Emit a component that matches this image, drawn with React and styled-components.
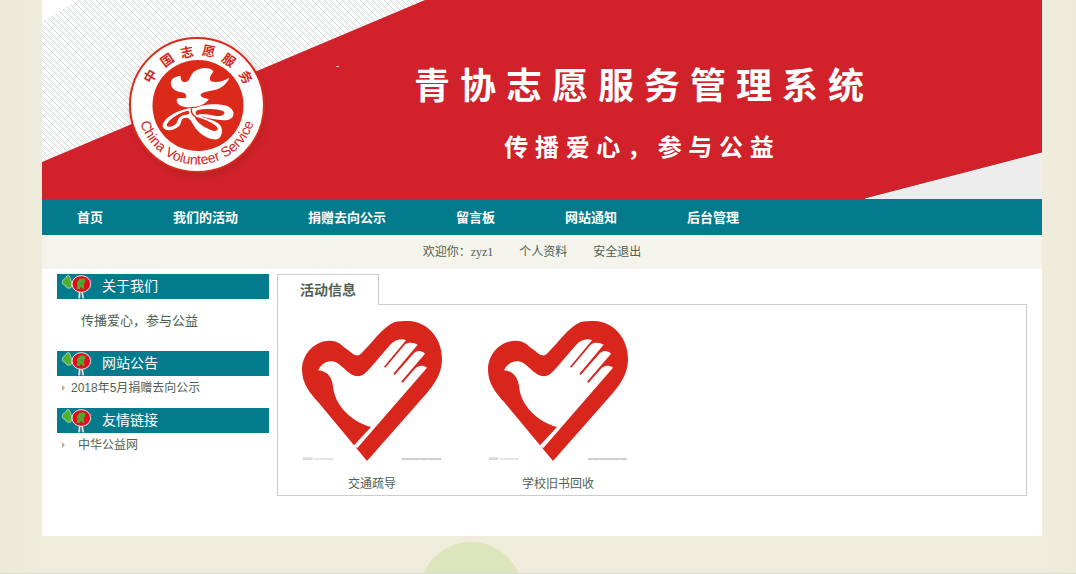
import React from "react";
import styled, { createGlobalStyle } from "styled-components";


const Global = createGlobalStyle`
    * {
      box-sizing: border-box;
    }

    body {
      margin: 0px;
      padding-left: 8px;
      background-color: #efecdb;
      background-image: linear-gradient(90deg, #ece9d6, #f0ecdb 40px, #f0ecdb calc(100% - 30px), #edead8);
      font-family: "Liberation Sans", "Noto Sans CJK SC", sans-serif;
      font-size: 12px;
      color: #4f5f53;
    }

    a {
      color: inherit;
      text-decoration: none;
    }
`

//Page Container
const Page = styled.div`
    background-color: #fff;
    max-width: 1000px;
    margin: 0px auto;
`

//Banner
const Banner = styled.header`
    background-color: #d1222b;
    position: relative;
    padding: 62px 0px 34px 372px;
    overflow: hidden;
`

//Banner Artwork
const Art = styled.svg`
    position: absolute;
    height: 100%;
    width: 100%;
    left: 0px;
    top: 0px;
`

//Banner Titles
const Titles = styled.div`
    flex-direction: column;
    position: relative;
    width: max-content;
    align-items: center;
    display: flex;
    color: #fff;
    gap: 18px;
`

//Site Name
const Name = styled.h1`
    line-height: 50px;
    font-weight: bold;
    font-size: 36px;
    margin: 0px;
`

//Slogan
const Slogan = styled.p`
    line-height: 35px;
    font-weight: bold;
    font-size: 24px;
    margin: 0px;
`

//Navigation
const Nav = styled.nav`
    background-color: #037b8c;
    flex-wrap: wrap;
    display: flex;
`

//Navigation Link
const Nl = styled.a`
    font-weight: bold;
    line-height: 34px;
    padding: 2px 35px 0px;
    font-size: 13px;
    color: #fff;
`

//User Bar
const Ub = styled.div`
    background-color: #f5f4ec;
    justify-content: center;
    padding-right: 20px;
    line-height: 34px;
    display: flex;
    gap: 26px;
`

//User Name
const User = styled.span`
    font-family: "Liberation Serif", serif;
`

//Main Content
const Mc = styled.main`
    padding: 5px 15px 40px;
    align-items: flex-start;
    display: flex;
    gap: 8px;
`

//Sidebar
const Side = styled.aside`
    flex: 0 0 212px;
`

//Sidebar Heading
const Sh = styled.h2`
    background-color: #037b8c;
    font-weight: normal;
    align-items: center;
    line-height: 25px;
    padding-left: 4px;
    font-size: 14px;
    display: flex;
    color: #fff;
    margin: 0px;
    gap: 9px;
`

//About Text
const About = styled.p`
    padding: 12px 0px 20px 24px;
    line-height: 20px;
    font-size: 13px;
    margin: 0px;
`

//Sidebar List
const List = styled.ul`
    padding: 1px 0px 9px 5px;
    list-style: none;
    margin: 0px;
`

//List Item
const Li = styled.li`
    gap: ${(p) => (p.$indent ? "13px" : "6px")};
    align-items: center;
    line-height: 22px;
    display: flex;

    &::before {
      border-left: 3px solid #b9ad93;
      border-bottom: 3px solid transparent;
      border-top: 3px solid transparent;
      content: "";
    }
`

//Activities
const Act = styled.section`
    min-width: 0px;
    flex: 1;
`

//Activities Tab
const Tab = styled.button`
    border: 1px solid #ccc;
    border-bottom: none;
    background: #fff;
    margin-bottom: -1px;
    position: relative;
    font-family: inherit;
    font-weight: bold;
    line-height: 30px;
    padding: 0px 22px;
    font-size: 14px;
    color: inherit;
    display: block;
`

//Activities Box
const Box = styled.div`
    border: 1px solid #ccc;
    padding: 16px 1px 0px;
    flex-wrap: wrap;
    display: flex;
`

//Activity
const Item = styled.a`
    flex-direction: column;
    align-items: center;
    line-height: 22px;
    display: flex;
    width: 186px;
    gap: 12px;
`

//Footer
const Footer = styled.footer`
    border-bottom: 1px solid #d9dbd4;
    margin-left: -8px;
    position: relative;
    overflow: hidden;
    height: 38px;

    &::after {
      background-color: #dde5bd;
      border-radius: 50%;
      position: absolute;
      height: 104px;
      width: 104px;
      content: "";
      left: calc(50% - 119px);
      top: 6px;
    }
`


const ring = [
    ["中", -58, 150, 76],
    ["国", -35, 167, 60],
    ["志", -11, 187, 52],
    ["愿", 12, 209, 51],
    ["服", 35, 229, 60],
    ["务", 61, 246, 77],
]

const BannerArt = () => (
    <Art viewBox="0 0 1000 199" preserveAspectRatio="xMinYMin slice" aria-hidden="true">
        <defs>
            <pattern id="hatch" width="6" height="6" patternUnits="userSpaceOnUse">
                <rect width="6" height="6" fill="#f8f9f9" />
                <path d="M-1 -1L7 7M-1 5L1 7M5 -1L7 1" stroke="#d6d9dc" strokeWidth="1" />
            </pattern>
            <filter id="soft" x="-20%" y="-20%" width="140%" height="140%">
                <feGaussianBlur stdDeviation="3" />
            </filter>
            <path id="arc" d="M97 114A59.500 59.500 0 0 0 215 114" />
        </defs>
        <path d="M0 0H383L0 162Z" fill="url(#hatch)" />
        <path d="M0 0H36L0 22Z" fill="#fff" />
        <path d="M823 199L1000 153V199Z" fill="#ededed" />
        <path d="M823 199L1000 153" stroke="#fff" strokeWidth="1" />
        <path d="M294 66.500H297" stroke="#f3c9cb" />
        <circle cx="157" cy="109" r="68" fill="#9c1a1c" opacity="0.35" filter="url(#soft)" />
        <circle cx="155" cy="105" r="67" fill="#fff" stroke="#dc2a1a" strokeWidth="2" />
        <circle cx="156" cy="105.500" r="45.500" fill="#dc2a1a" />
        <g fill="#d3261b" fontWeight="bold" fontSize="13" textAnchor="middle">
            {ring.map(([c, a, x, y]) => (
                <text key={a} transform={`translate(${x - 42} ${y}) rotate(${a})`} y="5">{c}</text>
            ))}
        </g>
        <path id="arcLow" d="M95.500 105A59.500 59.500 0 0 0 214.500 105" fill="none" />
        <text fill="#d3261b" fontSize="14" textAnchor="middle">
            <textPath href="#arcLow" startOffset="50%">China Volunteer Service</textPath>
        </text>
        <g transform="translate(118 65) scale(0.33333)">
            <path fill="#fff" d="M33 58C30 45 40 35 62 32C60 48 72 56 84 48C92 40 92 22 112 14C132 6 155 8 160 20C152 30 146 40 152 48C166 54 188 50 208 38C200 58 182 72 160 76C140 80 122 82 122 92C126 98 138 100 146 102C138 116 122 124 98 126C74 130 50 122 50 106C50 98 60 98 74 100C84 96 78 84 66 82C46 80 34 70 33 58Z" />
            <path fill="#fff" d="M98 129C60 130 6 160 8 184C12 202 46 198 60 180C66 168 62 158 80 158C94 160 96 178 112 196C128 214 152 226 172 223C188 216 190 192 180 180C168 166 138 162 122 154C146 160 186 170 206 164L216 158C226 146 220 132 202 123C176 114 130 116 110 128Z" />
            <path fill="#dc2a1a" d="M82 137C60 142 22 164 20 182C28 190 44 182 50 174C54 160 62 150 78 149C92 149 90 138 82 137Z" />
            <path fill="#dc2a1a" d="M104 156C112 154 168 174 173 190C174 198 164 200 154 196C136 188 112 176 104 156Z" />
            <path fill="#dc2a1a" d="M112 136C134 130 176 130 192 140C198 148 184 156 164 152C142 148 124 144 112 150C104 146 106 140 112 136Z" />
            <path fill="none" stroke="#dc2a1a" strokeWidth="4" d="M96 130C90 138 98 152 108 156" />
        </g>
    </Art>
)

const Mascot = () => (
    <svg width="32" height="25" viewBox="9 6 96 75" aria-hidden="true">
        <path d="M65 58L63 79M72 60L76 79" stroke="#dfe6e6" strokeWidth="5" />
        <path d="M67 64L69 78" stroke="#7a8f95" strokeWidth="3" />
        <path d="M13 31C14 20 20 23 23 18C25 9 35 8 36 17L42 34L39 47C30 52 22 45 21 39C15 39 12 36 13 31Z" fill="#4fb12f" stroke="#dcebe4" strokeWidth="2" />
        <ellipse cx="70" cy="36" rx="28" ry="25" fill="#e30b20" stroke="#f3e6e4" strokeWidth="3" />
        <path d="M62 24C66 18 80 19 83 24L79 34L77 40L80 50H73L69 44L65 51H56L59 38L56 33Z" fill="#52a92e" />
        <path d="M68 34H74" stroke="#3d8a2a" strokeWidth="2" />
        <path d="M95 23L100 27L96 32" fill="none" stroke="#e56bc2" strokeWidth="3" />
    </svg>
)

const Heart = () => (
    <svg width="140" height="140" viewBox="96 158 420 420" aria-hidden="true">
        <path fill="#d9261c" d="M96 305C96 255 135 217 180 217C205 217 213 230 235 246C250 260 264 268 275 254C310 220 335 180 372 162C385 158 400 158 415 158C475 160 516 212 516 272C516 315 495 345 470 375L291 578L252 531L145 402C120 375 96 345 96 305Z" />
        <path fill="#fff" d="M144 306C155 285 170 277 188 279C216 284 234 325 266 324C282 322 290 310 300 300L360 230C374 214 394 208 408 216L342 295L346 298L404 229C415 220 432 222 443 229L370 316L374 320L432 254C442 245 456 246 465 256L393 340L398 343L436 300C446 290 460 290 471 298L262 539L250 533L303 476C245 462 195 410 190 360C187 330 175 308 144 306Z" />
        <path d="M99 571H128" stroke="#d6d6d6" strokeWidth="8" strokeDasharray="8 1" />
        <path d="M132 572H189" stroke="#d6d6d6" strokeWidth="4" strokeDasharray="5 1" />
        <path d="M396 572H513" stroke="#b5b5b5" strokeWidth="5" strokeDasharray="6 1" />
    </svg>
)

const links = ["首页", "我们的活动", "捐赠去向公示", "留言板", "网站通知", "后台管理"]
const activities = ["交通疏导", "学校旧书回收"]


const App = () => {
    return(
    <>
    <Global />
    <Page>
        <Banner>
            <BannerArt />
            <Titles>
                <Name>青 协 志 愿 服 务 管 理 系 统</Name>
                <Slogan>传 播 爱 心 ， 参 与 公 益</Slogan>
            </Titles>
        </Banner>
        <Nav>
            {links.map((l) => <Nl href="#" key={l}>{l}</Nl>)}
        </Nav>
        <Ub>
            <span>欢迎你：<User>zyz1</User></span>
            <a href="#">个人资料</a>
            <a href="#">安全退出</a>
        </Ub>
        <Mc>
            <Side>
                <Sh><Mascot />关于我们</Sh>
                <About>传播爱心，参与公益</About>
                <Sh><Mascot />网站公告</Sh>
                <List>
                    <Li><a href="#">2018年5月捐赠去向公示</a></Li>
                </List>
                <Sh><Mascot />友情链接</Sh>
                <List>
                    <Li $indent><a href="#">中华公益网</a></Li>
                </List>
            </Side>
            <Act>
                <Tab type="button">活动信息</Tab>
                <Box>
                    {activities.map((a) => (
                        <Item href="#" key={a}>
                            <Heart />
                            {a}
                        </Item>
                    ))}
                </Box>
            </Act>
        </Mc>
    </Page>
    <Footer />
    </>
    )
}


export default App;
